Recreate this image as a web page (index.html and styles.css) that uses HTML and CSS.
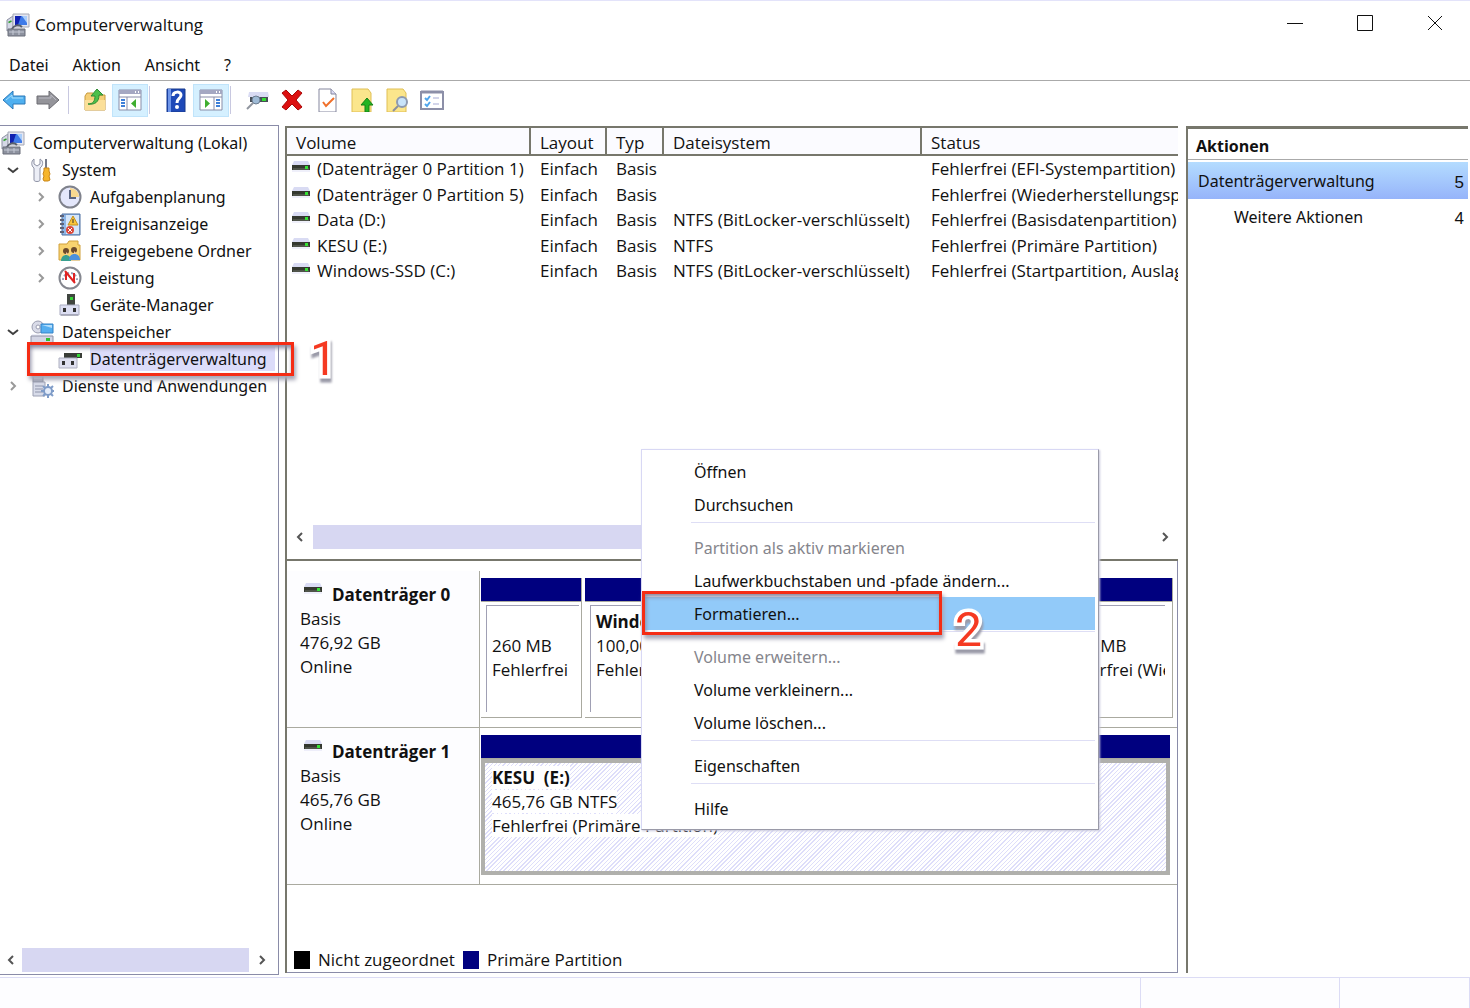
FILE: index.html
```html
<!DOCTYPE html>
<html lang="de">
<head>
  <meta charset="UTF-8" />
  <meta name="viewport" content="width=device-width, initial-scale=1.0"/>
  <title>Computerverwaltung</title>
  <link rel="stylesheet" href="styles.css">
</head>
<body>

<!-- shared icons -->
<svg class="sprite" aria-hidden="true">
  <symbol id="i-computer" viewBox="0 0 24 24">
    <path d="M1 7l6-4v12l-6 3z" fill="#d5d8e6" stroke="#8d91a3"/>
    <path d="M2.500 9.500l3-1.500" stroke="#2fa02f" stroke-width="1.500"/>
    <path d="M7 1h16v13H7z" fill="#e4e6f0" stroke="#a5a8b5"/>
    <path d="M9 3h12v9H9z" fill="#3f7be8"/>
    <path d="M9 3h6l-3 9H9z" fill="#1020b0"/>
    <path d="M16 3h5v7z" fill="#a9cdfa"/>
    <path d="M6 16c2-4 7-5 10-2" fill="none" stroke="#5a606c" stroke-width="2"/>
    <path d="M2 16h17v7H2z" fill="#8d929f" stroke="#6a6f7b"/>
    <path d="M3 19h15M7 17v5M13 17v5" stroke="#c6cad6"/>
  </symbol>
  <symbol id="i-drive" viewBox="0 0 20 12">
    <path d="M3 0h14l2 4H1z" fill="#d9dbf3"/>
    <path d="M1 4h18v5H1z" fill="#34382f"/>
    <path d="M2 8h16" stroke="#6b7066"/>
    <path d="M14 5h3v3h-3z" fill="#35e035"/>
    <path d="M1 10h18" stroke="#dfe0f5"/>
  </symbol>
  <symbol id="i-left" viewBox="0 0 10 12"><path d="M7 2L3 6l4 4" fill="none" stroke="#555" stroke-width="2"/></symbol>
  <symbol id="i-right" viewBox="0 0 10 12"><path d="M3 2l4 4-4 4" fill="none" stroke="currentColor" stroke-width="2"/></symbol>
  <symbol id="i-down" viewBox="0 0 12 10"><path d="M1 3l5 4 5-4" fill="none" stroke="#404040" stroke-width="2"/></symbol>
</svg>

<header class="titlebar">
  <svg class="icon"><use href="#i-computer"/></svg>
  <h1>Computerverwaltung</h1>
  <div class="window-buttons">
    <button aria-label="Minimieren"><svg viewBox="0 0 16 16"><path d="M0 8.500h16"/></svg></button>
    <button aria-label="Maximieren"><svg viewBox="0 0 16 16"><path d="M.5.5h15v15H.5z"/></svg></button>
    <button aria-label="Schließen"><svg viewBox="0 0 16 16"><path d="M1 1l14 14M15 1L1 15"/></svg></button>
  </div>
</header>

<nav class="menubar">
  <button>Datei</button>
  <button>Aktion</button>
  <button>Ansicht</button>
  <button>?</button>
</nav>

<div class="toolbar">
  <button aria-label="Zurück"><svg viewBox="0 0 24 24"><path d="M1 12l10-9v5h12v8H11v5z" fill="#4fb0f0" stroke="#2c78b8"/><path d="M4 12l6-5v3h11" fill="none" stroke="#a8defc"/></svg></button>
  <button aria-label="Vorwärts"><svg viewBox="0 0 24 24"><path d="M23 12L13 3v5H1v8h12v5z" fill="#94949a" stroke="#6c6c72"/><path d="M3 10h12V7l5 5" fill="none" stroke="#b9b9c2"/></svg></button>
  <span class="divider"></span>
  <button aria-label="Nach oben"><svg viewBox="0 0 24 24"><path d="M2 8l2-3h6l2 2h10v15H2z" fill="#f5cf77" stroke="#c79a3c"/><path d="M2 12h20v10H2z" fill="#fbdf98"/><path d="M5 16c5 0 7-3 7-8H8l6-7 6 6h-4c0 7-4 10-11 9z" fill="#4cc04a" stroke="#2f8d34"/></svg></button>
  <button class="active" aria-label="Konsolenstruktur"><svg viewBox="0 0 24 24"><path d="M1 2h22v20H1z" fill="#fff" stroke="#898da8"/><path d="M1 2h22v4H1z" fill="#a5a8c2"/><path d="M17 4h1M20 4h1" stroke="#fff" stroke-width="2"/><path d="M1 9h22M9 9v13" stroke="#898da8"/><path d="M3 12h4M3 15h4M3 18h4" stroke="#3f80d8" stroke-width="2"/><path d="M18 11v9l-5-4.500z" fill="#3fae2f"/></svg></button>
  <span class="divider"></span>
  <button aria-label="Hilfe"><svg viewBox="0 0 24 24"><path d="M3 1h18v23H3z" fill="#1e49b8" stroke="#183a8c"/><path d="M4 1h3v23H4z" fill="#6f96ea"/><path d="M9 8c0-5 8-5 8-1 0 4-4 3-4 8" fill="none" stroke="#fff" stroke-width="3"/><circle cx="13" cy="19" r="2" fill="#fff"/></svg></button>
  <button class="active" aria-label="Aktionsbereich"><svg viewBox="0 0 24 24"><path d="M1 2h22v20H1z" fill="#fff" stroke="#898da8"/><path d="M1 2h22v4H1z" fill="#a5a8c2"/><path d="M17 4h1M20 4h1" stroke="#fff" stroke-width="2"/><path d="M1 9h22M15 9v13" stroke="#898da8"/><path d="M17 12h4M17 15h4M17 18h4" stroke="#3f80d8" stroke-width="2"/><path d="M6 11v9l5-4.500z" fill="#3fae2f"/></svg></button>
  <span class="divider"></span>
  <button aria-label="Verbinden"><svg viewBox="0 0 24 24"><path d="M4 4h19l1 5H3z" fill="#d9dbf3"/><path d="M5 9h18v5H5z" fill="#474d55"/><path d="M17 10h4v3h-4z" fill="#30dd30"/><circle cx="11" cy="12" r="4" fill="#9fbbd6" stroke="#6b7c90"/><path d="M8 15l-6 6" stroke="#90959f" stroke-width="2"/></svg></button>
  <button aria-label="Löschen"><svg viewBox="0 0 24 24"><path d="M2 5l4-3 6 6 6-6 4 3-6 7 6 7-4 3-6-6-6 6-4-3 6-7z" fill="#dc1010" stroke="#a80808"/></svg></button>
  <button aria-label="Eigenschaften"><svg viewBox="0 0 24 24"><path d="M4 1h12l5 5v18H4z" fill="#fff" stroke="#85879e"/><path d="M16 1v5h5" fill="#dcdcf5" stroke="#85879e"/><path d="M8 14l3 4 8-8" fill="none" stroke="#f0702a" stroke-width="2"/></svg></button>
  <button aria-label="Übergeordneter Ordner"><svg viewBox="0 0 24 24"><path d="M2 1h16l3 4v19H2z" fill="#fbe68c" stroke="#e0bf55"/><path d="M15 24v-7h-4l6-7 6 7h-4v7z" fill="#22b422" stroke="#148114"/></svg></button>
  <button aria-label="Suchen"><svg viewBox="0 0 24 24"><path d="M2 1h16l3 4v19H2z" fill="#fbe68c" stroke="#e0bf55"/><circle cx="17" cy="14" r="5" fill="#c9e4fa" stroke="#8e9ab0" stroke-width="2"/><path d="M13 18l-5 5" stroke="#8c909c" stroke-width="2"/></svg></button>
  <button aria-label="Optionen"><svg viewBox="0 0 24 24"><path d="M1 4h22v17H1z" fill="#fff" stroke="#8c8fa8" stroke-width="2"/><path d="M1 4h22" stroke="#8c8fa8" stroke-width="3"/><path d="M5 10l2 2 3-4M5 16l2 2 3-4" fill="none" stroke="#4fa5ec" stroke-width="2"/><path d="M13 10h6M13 16h6" stroke="#d3d5ea" stroke-width="2"/></svg></button>
</div>

<main class="panes">
  <aside class="tree-pane">
    <ul class="tree">
      <li class="root"><svg class="icon"><use href="#i-computer"/></svg><a href="#">Computerverwaltung (Lokal)</a></li>
      <li>
        <svg class="arrow"><use href="#i-down"/></svg>
        <svg class="icon" viewBox="0 0 24 24"><path d="M4 1v5l3 2 3-2V1c4 2 3 7 0 9v12c0 2-6 2-6 0V10C1 8 1 3 4 1z" fill="#eceef6" stroke="#8f93a5"/><path d="M16 1v9" stroke="#777b8a" stroke-width="2"/><path d="M14 10h5v3l1 3-1 2 1 4-2 1h-4l-1-2 1-3-1-2 1-3z" fill="#f6b52c" stroke="#c98516"/></svg>
        <a href="#">System</a>
      </li>
      <li class="sub">
        <svg class="arrow"><use href="#i-right"/></svg>
        <svg class="icon" viewBox="0 0 24 24"><circle cx="12" cy="12" r="10.500" fill="#e4e7fb" stroke="#7f828c" stroke-width="2"/><path d="M12 12V3c5 0 9 4 9 9z" fill="#f8d890"/><path d="M12 5v8h6" fill="none" stroke="#5a6480" stroke-width="2"/></svg>
        <a href="#">Aufgabenplanung</a>
      </li>
      <li class="sub">
        <svg class="arrow"><use href="#i-right"/></svg>
        <svg class="icon" viewBox="0 0 24 24"><path d="M4 2h18v21H4z" fill="#8fb7e8" stroke="#4c6ea0"/><path d="M8 3h13v19H8z" fill="#d5e6fa"/><path d="M2 4h4M2 8h4M2 12h4M2 16h4M2 20h4" stroke="#5d6278" stroke-width="2"/><path d="M15 4l5 9H10z" fill="#fac63a" stroke="#c48f1c"/><path d="M15 7v4" stroke="#333"/><circle cx="12" cy="18" r="4" fill="#dc4638"/><path d="M10 16l4 4M14 16l-4 4" stroke="#fff"/></svg>
        <a href="#">Ereignisanzeige</a>
      </li>
      <li class="sub">
        <svg class="arrow"><use href="#i-right"/></svg>
        <svg class="icon" viewBox="0 0 24 24"><path d="M1 5h8l2-3h9v4h2v15H1z" fill="#f8d370" stroke="#d0a03a"/><circle cx="8" cy="12" r="3" fill="#6b4a2c"/><circle cx="16" cy="11" r="3" fill="#6b4a2c"/><path d="M3 22c0-8 10-8 10 0z" fill="#38a090"/><path d="M11 21c0-8 11-8 11 0z" fill="#4a90dc"/><path d="M8 13l2 2-2 1zM16 12l2 2-2 1z" fill="#f2c69c"/></svg>
        <a href="#">Freigegebene Ordner</a>
      </li>
      <li class="sub">
        <svg class="arrow"><use href="#i-right"/></svg>
        <svg class="icon" viewBox="0 0 24 24"><circle cx="12" cy="12" r="10.500" fill="#fff" stroke="#85878f" stroke-width="2"/><path d="M5 14a7 7 0 0 1 14 0" fill="none" stroke="#9ca0b6" stroke-dasharray="2 2" stroke-width="2"/><path d="M7 5l10 12M16 16V7M8 14V7" fill="none" stroke="#e02222" stroke-width="2"/></svg>
        <a href="#">Leistung</a>
      </li>
      <li class="sub">
        <span class="arrow"></span>
        <svg class="icon" viewBox="0 0 24 24"><path d="M9 1h8v11H9z" fill="#40453f"/><path d="M12 4h3v3h-3z" fill="#35d435"/><path d="M2 12h19v10H2z" fill="#dcdef2" stroke="#a9abc0"/><path d="M5 15h3v4H5zM15 15h3v4h-3z" fill="#333"/><path d="M3 22h17" stroke="#8a8c9c"/></svg>
        <a href="#">Geräte-Manager</a>
      </li>
      <li>
        <svg class="arrow"><use href="#i-down"/></svg>
        <svg class="icon" viewBox="0 0 24 24"><circle cx="8" cy="7" r="6" fill="#d9dbe8" stroke="#9a9db0"/><circle cx="8" cy="7" r="2" fill="#fff" stroke="#9a9db0"/><path d="M11 4h12v9H11z" fill="#55aef0" stroke="#3483c8"/><path d="M12 5h10v3z" fill="#b4defb"/><path d="M2 14h20l1 3H1z" fill="#eff0fa"/><path d="M1 16h22v7H1z" fill="#d3d5e4" stroke="#8f92a5"/><path d="M16 18h4v3h-4z" fill="#30c030"/></svg>
        <a href="#">Datenspeicher</a>
      </li>
      <li class="sub selected">
        <span class="arrow"></span>
        <svg class="icon" viewBox="0 0 24 24"><path d="M6 6h18v5H6z" fill="#393d36"/><path d="M19 7h3v3h-3z" fill="#35d435"/><path d="M1 11h18v10H1z" fill="#dfe0f0" stroke="#aeb0c0"/><path d="M4 14h3v4H4zM13 14h3v4h-3z" fill="#333"/></svg>
        <a href="#">Datenträgerverwaltung</a>
        <span class="marker"></span>
        <span class="step">1</span>
      </li>
      <li>
        <svg class="arrow"><use href="#i-right"/></svg>
        <svg class="icon" viewBox="0 0 24 24"><path d="M3 1h10v7H3z" fill="#a4a9b8" stroke="#7d8292"/><path d="M4 4h8" stroke="#e0e3ee"/><path d="M3 8h12v14H3z" fill="#d7dbe9" stroke="#9ba0b3"/><path d="M5 12h8M5 15h8M5 18h8" stroke="#8f95ab"/><circle cx="18" cy="17" r="4" fill="#e5edfa" stroke="#7f9cc8" stroke-width="2"/><path d="M18 10v3M18 21v3M11 17h3M22 17h2M13 12l2 2M21 20l2 2M13 22l2-2M21 14l2-2" stroke="#7f9cc8" stroke-width="2"/></svg>
        <a href="#">Dienste und Anwendungen</a>
      </li>
    </ul>
    <div class="scrollbar">
      <button aria-label="Nach links"><svg><use href="#i-left"/></svg></button>
      <div class="track"><div class="thumb"></div></div>
      <button aria-label="Nach rechts"><svg><use href="#i-right"/></svg></button>
    </div>
  </aside>

  <section class="center-pane">
    <div class="volumes">
      <table>
        <colgroup><col class="c-volume"><col class="c-layout"><col class="c-type"><col class="c-fs"><col></colgroup>
        <thead>
          <tr><th>Volume</th><th>Layout</th><th>Typ</th><th>Dateisystem</th><th>Status</th></tr>
        </thead>
        <tbody>
          <tr><td><svg class="drive"><use href="#i-drive"/></svg>(Datenträger 0 Partition 1)</td><td>Einfach</td><td>Basis</td><td></td><td>Fehlerfrei (EFI-Systempartition)</td></tr>
          <tr><td><svg class="drive"><use href="#i-drive"/></svg>(Datenträger 0 Partition 5)</td><td>Einfach</td><td>Basis</td><td></td><td>Fehlerfrei (Wiederherstellungspartition)</td></tr>
          <tr><td><svg class="drive"><use href="#i-drive"/></svg>Data (D:)</td><td>Einfach</td><td>Basis</td><td>NTFS (BitLocker-verschlüsselt)</td><td>Fehlerfrei (Basisdatenpartition)</td></tr>
          <tr><td><svg class="drive"><use href="#i-drive"/></svg>KESU (E:)</td><td>Einfach</td><td>Basis</td><td>NTFS</td><td>Fehlerfrei (Primäre Partition)</td></tr>
          <tr><td><svg class="drive"><use href="#i-drive"/></svg>Windows-SSD (C:)</td><td>Einfach</td><td>Basis</td><td>NTFS (BitLocker-verschlüsselt)</td><td>Fehlerfrei (Startpartition, Auslagerungsdatei)</td></tr>
        </tbody>
      </table>
      <div class="scrollbar">
        <button aria-label="Nach links"><svg><use href="#i-left"/></svg></button>
        <div class="track"><div class="thumb"></div></div>
        <button aria-label="Nach rechts"><svg><use href="#i-right"/></svg></button>
      </div>
    </div>

    <div class="disks">
      <div class="disk">
        <div class="disk-label">
          <h2><svg class="drive"><use href="#i-drive"/></svg>Datenträger 0</h2>
          <p>Basis</p>
          <p>476,92 GB</p>
          <p>Online</p>
        </div>
        <div class="partitions">
          <div class="partition small">
            <div class="body"><p>&nbsp;</p><p>260 MB</p><p>Fehlerfrei</p></div>
          </div>
          <div class="partition">
            <div class="body"><p><b>Windows-SSD (C:)</b></p><p>100,00 GB NTFS</p><p>Fehlerfrei</p></div>
          </div>
          <div class="partition recovery">
            <div class="body"><p>&nbsp;</p><p>1000 MB</p><p>Fehlerfrei (Wiederherstellungspartition)</p></div>
          </div>
        </div>
      </div>
      <div class="disk">
        <div class="disk-label">
          <h2><svg class="drive"><use href="#i-drive"/></svg>Datenträger 1</h2>
          <p>Basis</p>
          <p>465,76 GB</p>
          <p>Online</p>
        </div>
        <div class="partitions">
          <div class="partition hatched">
            <div class="body"><p><b>KESU &nbsp;(E:)</b></p><p><span>465,76 GB NTFS</span></p><p><span>Fehlerfrei (Primäre Partition)</span></p></div>
          </div>
        </div>
      </div>
      <div class="legend">
        <span class="swatch unallocated"></span>Nicht zugeordnet
        <span class="swatch primary"></span>Primäre Partition
      </div>
    </div>

    <div class="context-menu" role="menu">
      <button role="menuitem">Öffnen</button>
      <button role="menuitem">Durchsuchen</button>
      <hr>
      <button role="menuitem" disabled>Partition als aktiv markieren</button>
      <button role="menuitem">Laufwerkbuchstaben und -pfade ändern...</button>
      <button role="menuitem" class="current">Formatieren...<span class="marker"></span><span class="step">2</span></button>
      <hr>
      <button role="menuitem" disabled>Volume erweitern...</button>
      <button role="menuitem">Volume verkleinern...</button>
      <button role="menuitem">Volume löschen...</button>
      <hr>
      <button role="menuitem">Eigenschaften</button>
      <hr>
      <button role="menuitem">Hilfe</button>
    </div>
  </section>

  <aside class="actions-pane">
    <h2>Aktionen</h2>
    <a href="#" class="group">Datenträgerverwaltung<span>5</span></a>
    <a href="#" class="more">Weitere Aktionen<span>4</span></a>
  </aside>
</main>

<footer class="statusbar"><span></span><span></span><span></span></footer>

</body>
</html>
```
FILE: styles.css
```css
* { box-sizing: border-box; }
body {
  margin: 0;
  min-height: 100vh;
  display: flex;
  flex-direction: column;
  background: #fff;
  color: #111;
  font-family: 'Noto Sans', 'Open Sans', sans-serif;
  font-size: 16px;
  line-height: 24px;
}
h1, h2, p, ul { margin: 0; padding: 0; }
a { color: inherit; text-decoration: none; }
button {
  background: none;
  border: none;
  padding: 0;
  font: inherit;
  color: inherit;
}
.sprite { position: absolute; width: 0; height: 0; }
.icon { width: 24px; height: 24px; flex: none; }
.drive { width: 20px; height: 12px; flex: none; }

/* title bar and menus */
.titlebar {
  display: flex;
  align-items: center;
  gap: 5px;
  height: 48px;
  padding-left: 6px;
  border-top: 1px solid #e3e3fa;
}
.titlebar h1 { flex: 1; font-family: 'Open Sans', sans-serif; font-size: 17px; font-weight: 400; }
.window-buttons { display: flex; }
.window-buttons button { width: 70px; height: 46px; }
.window-buttons svg { width: 16px; height: 16px; fill: none; stroke: #111; }
.menubar {
  display: flex;
  gap: 24px;
  height: 32px;
  padding: 1px 0 0 9px;
}
.toolbar {
  display: flex;
  align-items: center;
  height: 45px;
  padding-bottom: 6px;
  border-top: 1px solid #aaa;
}
.toolbar button {
  display: flex;
  align-items: center;
  justify-content: center;
  width: 35px;
  height: 33px;
}
.toolbar button:first-child { width: 28px; }
.toolbar button:nth-child(2) { width: 40px; }
.toolbar svg { width: 24px; height: 24px; }
.toolbar .active { background: #d5f0ff; border: 1px solid #c0e4fb; width: 36px; }
.toolbar .divider { width: 1px; height: 28px; margin: 0 8px 0 0; background: #c8c8e0; }
.toolbar .active + .divider { margin-left: 1px; }

/* panes */
.panes {
  flex: 1;
  display: grid;
  grid-template-columns: 279px minmax(0, 1fr) 284px;
  gap: 6px;
}
.tree-pane {
  display: flex;
  flex-direction: column;
  justify-content: space-between;
  margin-bottom: 2px;
  border: 1px solid #8a8ca8;
  border-left: none;
}
.tree { list-style: none; padding-top: 3px; }
.tree li {
  display: flex;
  align-items: center;
  height: 27px;
  position: relative;
  white-space: nowrap;
}
.tree .icon { margin-right: 8px; }
.tree .root { padding-left: 1px; }
.tree .sub { padding-left: 28px; }
.tree .arrow { width: 12px; height: 12px; margin: 0 11px 0 7px; flex: none; color: #999; }
.tree .selected a { background: #dcdcfa; margin-right: 3px; flex: 1; }

.scrollbar { display: flex; align-items: center; height: 28px; }
.scrollbar button { width: 26px; height: 24px; line-height: 12px; color: #555; }
.scrollbar button svg { width: 10px; height: 12px; }
.scrollbar .track { flex: 1; }
.scrollbar .thumb { height: 24px; background: #d7d7f2; }
.tree-pane .scrollbar { padding: 0 3px 0 0; }
.tree-pane .scrollbar button:first-child { width: 22px; }

.center-pane {
  position: relative;
  display: flex;
  flex-direction: column;
  margin: 1px 2px 4px 0;
  border-left: 2px solid #77776c;
}
.volumes, .disks { font-family: 'Open Sans', sans-serif; font-size: 17px; }
.volumes {
  flex: 1;
  display: flex;
  flex-direction: column;
  justify-content: space-between;
  overflow: hidden;
  padding-bottom: 8px;
  border-top: 2px solid #77776c;
  border-bottom: 2px solid #77776c;
}
table {
  width: 100%;
  table-layout: fixed;
  border-collapse: separate;
  border-spacing: 0;
}
.c-volume { width: 244px; }
.c-layout { width: 76px; }
.c-type { width: 57px; }
.c-fs { width: 258px; }
th {
  height: 28px;
  padding: 4px 0 0 9px;
  border-right: 2px solid #77776c;
  border-bottom: 2px solid #77776c;
  background: #fbfbff;
  font-weight: 400;
  line-height: 22px;
  text-align: left;
}
th:last-child { border-right: none; }
td {
  height: 26px;
  padding: 0 0 0 9px;
  overflow: hidden;
  white-space: nowrap;
}
tbody tr:nth-child(even) td { height: 25px; }
td:first-child { padding-left: 4px; overflow: visible; }
td .drive { margin-right: 6px; vertical-align: 2px; }
.volumes .thumb { width: 80%; }

.disks {
  display: flex;
  flex-direction: column;
  min-height: 412px;
  padding-top: 10px;
  border: 1px solid #8a8ca8;
  border-width: 0 1px 1px 0;
}
.disk { display: flex; height: 157px; }
.disk-label {
  width: 193px;
  flex: none;
  padding: 12px 0 0 13px;
  background: #fdfdff;
  border-right: 1px solid #aaaaa0;
  border-bottom: 1px solid #aaaaa0;
}
.disk-label h2 { display: flex; gap: 9px; font-size: 17px; line-height: 24px; padding-left: 3px; }
.partitions {
  flex: 1;
  min-width: 0;
  display: flex;
  gap: 3px;
  padding: 7px 4px 9px 1px;
  border-bottom: 1px solid #aaaaa0;
}
.partition {
  flex: 1;
  min-width: 0;
  display: flex;
  flex-direction: column;
  border: 1px solid #aaaaa0;
  border-width: 0 1px 1px 0;
}
.partition::before { content: ""; height: 23px; background: #00007f; border-bottom: 1px solid #aaaaa0; }
.partition.small { flex: 0 0 101px; }
.partition.recovery { flex: 0 0 127px; }
.partition .body {
  flex: 1;
  margin: 3px 7px 5px 5px;
  padding: 4px 0 0 5px;
  overflow: hidden;
  white-space: nowrap;
  border: 1px solid #a0a0b4;
  border-width: 1px 0 0 1px;
}
.partition.small .body { margin-right: 2px; }
.partition.hatched { border: none; margin-right: 3px; }
.partition.hatched .body {
  margin: 0;
  padding: 3px 0 0 7px;
  border: 4px solid #b0b0ac;
  background: repeating-linear-gradient(135deg, #fff 0 2px, #dedefa 2px 3px);
}
.hatched b, .hatched span { background: #fff; }
.legend { display: flex; align-items: center; gap: 8px; margin: auto 0 0 7px; }
.swatch { width: 16px; height: 18px; }
.unallocated { background: #000; }
.primary { background: #00007f; }

.context-menu {
  position: absolute;
  left: 354px;
  top: 323px;
  width: 458px;
  display: flex;
  flex-direction: column;
  padding: 5px 3px 4px;
  background: #fff;
  border: 1px solid #d8d8f4;
  border-right-color: #9a9aa8;
  border-bottom-color: #9a9aa8;
  box-shadow: 1px 1px 2px #c8c8dc;
}
.context-menu button {
  position: relative;
  height: 33px;
  padding-left: 49px;
  text-align: left;
}
.context-menu button:disabled { color: #85858c; }
.context-menu .current { background: #92caf9; }
.context-menu hr {
  width: 404px;
  height: 1px;
  margin: 1px 0 8px auto;
  border: none;
  background: #dedef5;
}

/* numbered hints */
.marker {
  position: absolute;
  border: 3px solid #f52c14;
  box-shadow: 2px 4px 4px #a8a8b8, inset 1px 3px 4px #8888a0;
}
.tree .marker { left: 27px; top: -3px; width: 267px; height: 34px; z-index: 1; }
.context-menu .marker { left: -3px; top: -6px; width: 300px; height: 44px; }
.step {
  position: absolute;
  z-index: 1;
  color: #f53a22;
  font: 48px/48px Roboto, sans-serif;
  -webkit-text-stroke: 7px #fff;
  paint-order: stroke fill;
  filter: drop-shadow(1px 4px 1px #9a9aa8);
}
.tree .step { left: 310px; top: -10px; }
.context-menu .step { left: 310px; top: 9px; }

.actions-pane {
  margin: 1px 2px 4px 0;
  border-left: 2px solid #77776c;
  border-top: 3px solid #77776c;
}
.actions-pane h2 {
  height: 31px;
  padding: 5px 0 0 8px;
  border-bottom: 1px solid #aaa;
  font-family: 'Open Sans', sans-serif;
  font-size: 16px;
  line-height: 24px;
}
.actions-pane a { display: flex; justify-content: space-between; padding: 0 4px 0 10px; height: 36px; line-height: 36px; }
.actions-pane .group { margin-top: 2px; height: 37px; line-height: 38px; background: linear-gradient(#b4dcff, #96b4fa); }
.actions-pane .more { padding-left: 46px; }
.actions-pane span { padding-top: 2px; font-family: 'Liberation Sans', sans-serif; font-size: 17px; }

.statusbar {
  display: flex;
  height: 31px;
  background: #fdfdff;
  border-top: 1px solid #dcdcf5;
}
.statusbar span { width: 199px; border-right: 1px solid #dcdcf5; }
.statusbar span:first-child { flex: 1; }
.statusbar span:last-child { width: 130px; }
```
